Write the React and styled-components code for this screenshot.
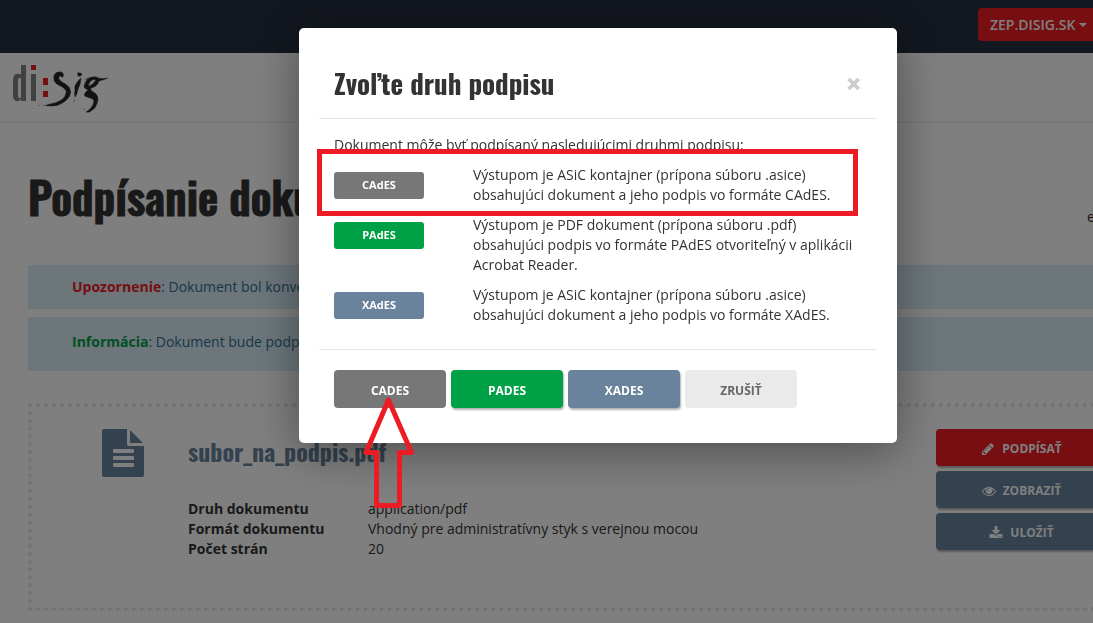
import React from "react";
import styled, { createGlobalStyle } from "styled-components";

const GlobalStyle = createGlobalStyle`
  *, *::before, *::after { box-sizing: border-box; }
  body {
    margin: 0;
    background: #fff;
    color: #333;
    font-family: "Open Sans", "Noto Sans", sans-serif;
    font-size: 14px;
    line-height: 20px;
  }
`;

const displayFont = `Oswald, "Open Sans Condensed", "Liberation Sans Narrow", "Roboto Condensed", sans-serif`;

const colors = {
  red: "#ee1c22",
  green: "#00a046",
  blue: "#69839c",
  grey: "#777777",
  light: "#eaeaea",
};

const Page = styled.div`
  min-height: 100vh;
  overflow: hidden;
`;

/* The page is wider than the window; its right edge runs out of view. */
const Wide = styled.div`
  width: calc(100% + 103px);
`;

const TopBar = styled.nav`
  height: 53px;
  padding: 8px 28px 0 0;
  background: #262e3e;
  display: flex;
  justify-content: flex-end;
  align-items: flex-start;
`;

const AccountButton = styled.button`
  display: flex;
  align-items: center;
  gap: 4px;
  width: 190px;
  height: 33px;
  padding: 0 12px;
  border: 0;
  border-radius: 4px;
  background: ${colors.red};
  color: #fff;
  font: 600 14px/20px "Open Sans", sans-serif;
  &::after {
    content: "";
    border: 4px solid transparent;
    border-top-color: #fff;
    border-bottom: 0;
  }
`;

const Header = styled.header`
  height: 69px;
  padding: 8px 10px 0;
  border-bottom: 1px solid #eee;
  box-shadow: 0 1px 1px #f5f5f5;
`;

const LogoLink = styled.a`
  display: block;
  width: 100px;
  svg { display: block; }
`;

const Main = styled.main`
  padding: 45px 28px 12px;
`;

const TitleRow = styled.div`
  display: flex;
  justify-content: space-between;
  align-items: flex-end;
  height: 60px;
  margin-bottom: 38px;
`;

const Title = styled.h1`
  margin: 0;
  font: 600 44px/60px ${displayFont};
  -webkit-text-stroke: 1px currentColor;
`;

const Aside = styled.span`
  width: 81px;
  white-space: nowrap;
`;

const Alert = styled.p`
  margin: 0 0 8px;
  padding: ${(p) => (p.$roomy ? "15px 44px 19px" : "12px 44px")};
  background: #d9edf7;
  color: #31708f;
`;

const Mark = styled.strong`
  color: ${(p) => p.$color};
`;

const FileCard = styled.section`
  display: flex;
  margin-top: 32px;
  height: 208px;
  padding: 22px 57px 0 70px;
  border: 4px dotted #e6e6e6;
`;

const FileIcon = styled.svg`
  flex: none;
  width: 42px;
  height: 48px;
  margin-right: 44px;
  fill: ${colors.blue};
`;

const FileInfo = styled.div`
  flex: 1;
`;

const FileName = styled.h2`
  margin: 4px 0 30px;
  color: ${colors.blue};
  font: 700 24px/36px ${displayFont};
`;

const Facts = styled.dl`
  display: grid;
  grid-template-columns: 180px 1fr;
  margin: 0;
  dt { font-weight: 700; }
  dd { margin: 0; }
`;

const Actions = styled.div`
  display: flex;
  flex-direction: column;
  gap: 5px;
  width: 171px;
`;

const Button = styled.button`
  display: flex;
  align-items: center;
  justify-content: center;
  gap: 7px;
  width: ${(p) => p.$width || "100%"};
  height: ${(p) => p.$height || "37px"};
  padding: ${(p) => (p.$height ? "3px 0 0" : "2px 0 0")};
  border: 0;
  border-radius: 4px;
  background: ${(p) => p.$color};
  color: ${(p) => p.$ink || "#fff"};
  box-shadow: ${(p) => (p.$flat ? "none" : "1px 2px 2px rgba(0, 0, 0, 0.3)")};
  font: 700 12px/20px "Open Sans", sans-serif;
  text-transform: uppercase;
  svg { width: 14px; height: 14px; fill: currentColor; }
`;

const Backdrop = styled.div`
  position: fixed;
  top: 0;
  bottom: 0;
  left: 0;
  width: calc(100% + 103px);
  padding-top: 28px;
  background: rgba(0, 0, 0, 0.5);
`;

const Dialog = styled.div`
  position: relative;
  width: 598px;
  margin: 0 auto;
  padding: 20px;
  border-radius: 5px;
  background: #fff;
  box-shadow: 0 8px 48px rgba(0, 0, 0, 0.4);
`;

const DialogHead = styled.div`
  display: flex;
  justify-content: space-between;
  align-items: center;
  height: 71px;
  padding: 0 15px;
  border-bottom: 1px solid #e5e5e5;
`;

const DialogTitle = styled.h2`
  margin: 0;
  font: 700 27px/40px ${displayFont};
`;

const CloseButton = styled.button`
  padding: 0;
  border: 0;
  background: none;
  color: #ccc;
  font: 800 28px/28px "Open Sans", sans-serif;
`;

const DialogBody = styled.div`
  padding: 16px 15px 14px;
  border-bottom: 1px solid #e5e5e5;
`;

const Intro = styled.p`
  margin: 0 0 10px;
`;

const Choice = styled.div`
  display: grid;
  grid-template-columns: 90px 1fr;
  column-gap: 49px;
  margin-bottom: 10px;
  p { margin: 0; }
`;

const Tag = styled.span`
  height: 27px;
  margin-top: 7px;
  border-radius: 3px;
  background: ${(p) => p.$color};
  color: #fff;
  font-size: 11px;
  font-weight: 700;
  line-height: 25px;
  text-align: center;
`;

const DialogFoot = styled.div`
  display: flex;
  gap: 5px;
  padding: 20px 15px 15px;
`;

const HighlightBox = styled.div`
  position: absolute;
  left: 18px;
  top: 121px;
  width: 541px;
  height: 67px;
  border: 5px solid #ed1c24;
  pointer-events: none;
`;

const Arrow = styled.svg`
  position: absolute;
  left: 61px;
  top: 367px;
  fill: none;
  stroke: #ed1c24;
  stroke-width: 5;
  stroke-linejoin: round;
  pointer-events: none;
`;

const Logo = () => (
  <svg width="100" height="54" viewBox="10 61 100 54" role="img" aria-label="di:Sig">
    <g fill="#808284">
      <path d="M21 65h5v36h-5v-2q-2 3-5 2q-3-1-3-6V81q0-6 3-7q3-1 5 1zM21 79q-1-2-2-1q-1 0-1 3v13q0 4 1 4q1 1 2-1z" fillRule="evenodd" />
      <path d="M31 74h5v27h-5z" />
    </g>
    <path fill="#ee1c22" d="M31 65h5v5h-5zM43 78h5v7h-5zM43 91h5v6h-5z" />
    <g fill="#262223">
      <path stroke="#262223" strokeWidth="0.8" d="M63 76.5Q64 72 60 72Q55 72 54 76Q53 81 57 84Q66 88 66.500 92Q65 102 49 104.500L46 105.500Q52 106.500 58 105Q70 100 70.500 92Q70 87 66 84.500Q59 81 58.500 78Q59 75 61 76Q62 78 63 76.500z" />
      <path opacity="0.5" d="M38.500 105l1.500 0 0 .7-1.500 0zM43 105l3 0 0 .7-3 0z" />
      <path stroke="#262223" strokeWidth="0.4" d="M77.500 73q2-1 4.500 1q-1 3-4 2zM76.500 83q2-3 4.500-5q0 6-3 11q-1 6-3 8q-1-3 0-7q-1-3 1.500-7z" />
      <path opacity="0.6" d="M73.500 101l1.500-2-1 4z" />
      <path stroke="#262223" strokeWidth="0.4" fillRule="evenodd" d="M84 86Q86 78 92 77Q96 76 98 78Q103 79 108 78Q104 80 99 81Q97 87 91 88Q90 90 92 91Q98 94 98 99Q97 108 91 111Q89 113 86 112Q93 108 94 101Q93 98 87 97Q83 96 85 93Q87 90 89 90Q84 89 84 86zM88 86Q92 86 96 80Q91 78 88 86z" />
      <path opacity="0.6" d="M83 108l2 2-1 0zM85 79l5-2-4 3z" />
    </g>
  </svg>
);

const icons = {
  pencil:
    "M491 1536l91-91-235-235-91 91v107h128v128h107zM1014 608q0-22-22-22-10 0-17 7l-542 542q-7 7-7 17 0 22 22 22 10 0 17-7l542-542q7-7 7-17zM960 416l416 416-832 832h-416v-416zM1643 512q0 53-37 90l-166 166-416-416 166-165q36-38 90-38 53 0 91 38l235 234q37 39 37 91z",
  eye: "M1664 960q-152-236-381-353 61 104 61 225 0 185-131.5 316.5t-316.5 131.5-316.5-131.5-131.5-316.5q0-121 61-225-229 117-381 353 133 205 333.5 326.5t434.5 121.5 434.5-121.5 333.5-326.5zM944 576q0-20-14-34t-34-14q-125 0-214.5 89.5t-89.5 214.5q0 20 14 34t34 14 34-14 14-34q0-86 61-147t147-61q20 0 34-14t14-34zM1792 960q0 34-20 69-140 230-376.5 368.5t-499.5 138.5-499.5-139-376.5-368q-20-35-20-69t20-69q140-229 376.5-368t499.5-139 499.5 139 376.5 368q20 35 20 69z",
  download:
    "M1344 1344q0-26-19-45t-45-19-45 19-19 45 19 45 45 19 45-19 19-45zM1600 1344q0-26-19-45t-45-19-45 19-19 45 19 45 45 19 45-19 19-45zM1728 1120v320q0 40-28 68t-68 28h-1472q-40 0-68-28t-28-68v-320q0-40 28-68t68-28h465l135 136q58 56 136 56t136-56l136-136h464q40 0 68 28t28 68zM1403 551q17 41-14 70l-448 448q-18 19-45 19t-45-19l-448-448q-31-29-14-70 17-39 59-39h256v-448q0-26 19-45t45-19h256q26 0 45 19t19 45v448h256q42 0 59 39z",
};

const Icon = ({ name }) => (
  <svg viewBox="0 0 1792 1792" aria-hidden="true">
    <path d={icons[name]} />
  </svg>
);

const choices = [
  {
    name: "CAdES",
    color: colors.grey,
    text: "Výstupom je ASiC kontajner (prípona súboru .asice) obsahujúci dokument a jeho podpis vo formáte CAdES.",
  },
  {
    name: "PAdES",
    color: colors.green,
    text: "Výstupom je PDF dokument (prípona súboru .pdf) obsahujúci podpis vo formáte PAdES otvoriteľný v aplikácii Acrobat Reader.",
  },
  {
    name: "XAdES",
    color: colors.blue,
    text: "Výstupom je ASiC kontajner (prípona súboru .asice) obsahujúci dokument a jeho podpis vo formáte XAdES.",
  },
];

export default function App() {
  return (
    <Page>
      <GlobalStyle />
      <Wide>
        <TopBar>
          <AccountButton>ZEP.DISIG.SK</AccountButton>
        </TopBar>
        <Header>
          <LogoLink href="#">
            <Logo />
          </LogoLink>
        </Header>
        <Main>
          <TitleRow>
            <Title>Podpísanie dokumentu</Title>
            <Aside>e</Aside>
          </TitleRow>
          <Alert>
            <Mark $color={colors.red}>Upozornenie</Mark>: Dokument bol konvertovaný
          </Alert>
          <Alert $roomy>
            <Mark $color={colors.green}>Informácia</Mark>: Dokument bude podpísaný
          </Alert>
          <FileCard>
            <FileIcon viewBox="0 0 42 48" aria-hidden="true">
              <path
                fillRule="evenodd"
                d="M2 0H25V15Q25 17 27 17H42V46Q42 48 40 48H2Q0 48 0 46V2Q0 0 2 0zM12 20Q11 20 11 21V23Q11 24 12 24H31Q32 24 32 23V21Q32 20 31 20zM12 27Q11 27 11 28V30Q11 31 12 31H31Q32 31 32 30V28Q32 27 31 27zM12 34Q11 34 11 35V37Q11 38 12 38H31Q32 38 32 37V35Q32 34 31 34z"
              />
              <path d="M28 1L41 14H28z" />
            </FileIcon>
            <FileInfo>
              <FileName>subor_na_podpis.pdf</FileName>
              <Facts>
                <dt>Druh dokumentu</dt>
                <dd>application/pdf</dd>
                <dt>Formát dokumentu</dt>
                <dd>Vhodný pre administratívny styk s verejnou mocou</dd>
                <dt>Počet strán</dt>
                <dd>20</dd>
              </Facts>
            </FileInfo>
            <Actions>
              <Button $color={colors.red}>
                <Icon name="pencil" />
                Podpísať
              </Button>
              <Button $color={colors.blue}>
                <Icon name="eye" />
                Zobraziť
              </Button>
              <Button $color={colors.blue}>
                <Icon name="download" />
                Uložiť
              </Button>
            </Actions>
          </FileCard>
        </Main>
      </Wide>

      <Backdrop>
        <Dialog role="dialog" aria-modal="true" aria-labelledby="dialog-title">
          <DialogHead>
            <DialogTitle id="dialog-title">Zvoľte druh podpisu</DialogTitle>
            <CloseButton aria-label="Zavrieť">×</CloseButton>
          </DialogHead>
          <DialogBody>
            <Intro>Dokument môže byť podpísaný nasledujúcimi druhmi podpisu:</Intro>
            {choices.map((c) => (
              <Choice key={c.name}>
                <Tag $color={c.color}>{c.name}</Tag>
                <p>{c.text}</p>
              </Choice>
            ))}
          </DialogBody>
          <DialogFoot>
            <Button $width="112px" $height="38px" $color={colors.grey} $flat>Cades</Button>
            <Button $width="112px" $height="38px" $color={colors.green}>Pades</Button>
            <Button $width="112px" $height="38px" $color={colors.blue}>Xades</Button>
            <Button $width="112px" $height="38px" $color={colors.light} $ink="#666" $flat>Zrušiť</Button>
          </DialogFoot>
          <HighlightBox />
          <Arrow width="60" height="120" viewBox="360 395 60 120" aria-hidden="true">
            <path d="M388.5 400L366 452.5H376.5V505.5H399.5V452.5H411.5Z" />
          </Arrow>
        </Dialog>
      </Backdrop>
    </Page>
  );
}
